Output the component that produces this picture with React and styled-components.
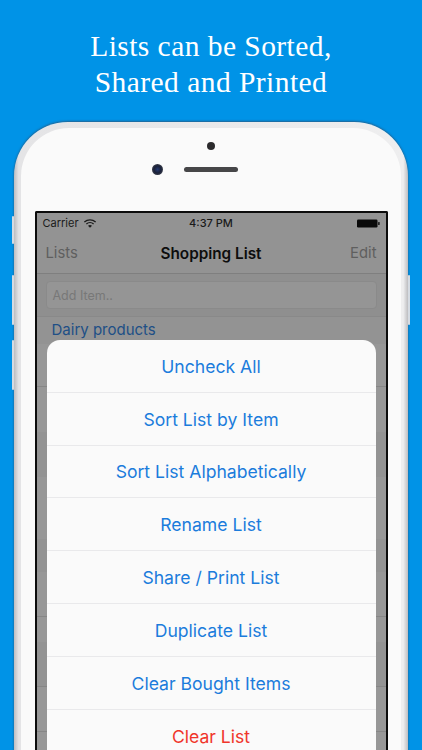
import React from "react";
import styled, { createGlobalStyle } from "styled-components";

const GlobalStyle = createGlobalStyle`
  html, body {
    margin: 0;
    padding: 0;
    background: #0093e7;
  }
`;

const Page = styled.div`
  width: 422px;
  height: 750px;
  overflow: hidden;
  background: #0093e7;
  display: flex;
  flex-direction: column;
  align-items: center;
`;

const Headline = styled.h1`
  margin: 0;
  padding-top: 28px;
  height: 94px;
  box-sizing: border-box;
  font-family: "Liberation Serif", serif;
  font-weight: 400;
  font-size: 29.5px;
  line-height: 36px;
  letter-spacing: 0.45px;
  color: #fff;
  text-align: center;
`;

const Phone = styled.div`
  position: relative;
  flex: none;
  width: 394px;
  height: 800px;
  box-sizing: border-box;
  margin-top: 28px;
  padding: 6px 7px 0;
  border-radius: 54px;
  background: linear-gradient(90deg, #bdbdc0 0, #e4e4e6 1.2%, #eeeeef 98.8%, #bdbdc0 100%);
  box-shadow: 0 -1px 2px rgba(60, 70, 90, 0.5), 0 0 2px rgba(60, 70, 90, 0.45);
`;

const Bezel = styled.div`
  height: 100%;
  box-sizing: border-box;
  padding-top: 83px;
  border-radius: 48px;
  background: #fafafa;
  display: flex;
  flex-direction: column;
  align-items: center;
`;

const SideButton = styled.span`
  position: absolute;
  top: ${(p) => p.$top}px;
  ${(p) => (p.$right ? "right: -2px;" : "left: -2px;")}
  width: 2px;
  height: ${(p) => p.$height}px;
  background: #d5dbe2;
  border-radius: 1px;
`;

const Sensor = styled.span`
  position: absolute;
  top: 20px;
  left: 193px;
  width: 8px;
  height: 8px;
  border-radius: 50%;
  background: #2b2a2c;
`;

const Camera = styled.span`
  position: absolute;
  top: 41.5px;
  left: 137.5px;
  width: 11px;
  height: 11px;
  border-radius: 50%;
  background: radial-gradient(circle at 50% 50%, #23386f 0, #1a2138 45%, #55575c 100%);
`;

const Speaker = styled.span`
  position: absolute;
  top: 45px;
  left: 170px;
  width: 54px;
  height: 5px;
  border-radius: 3px;
  background: #464648;
`;

const Screen = styled.div`
  position: relative;
  flex: none;
  width: 353px;
  height: 600px;
  box-sizing: border-box;
  border: 2px solid #0c0c0c;
  border-bottom: 0;
  border-radius: 2px 2px 0 0;
  background: #939393;
  font-family: Inter, "Liberation Sans", sans-serif;
  overflow: hidden;
`;

const StatusBar = styled.div`
  height: 20px;
  padding: 0 6px;
  display: grid;
  grid-template-columns: 1fr auto 1fr;
  align-items: center;
  font-size: 11px;
  color: #1a1a1a;
`;

const Carrier = styled.div`
  display: flex;
  align-items: center;
  gap: 5px;
`;

const Clock = styled.span`
  font-weight: 500;
`;

const BatteryWrap = styled.div`
  justify-self: end;
  display: flex;
  align-items: center;
`;

const NavBar = styled.div`
  height: 40px;
  padding: 0 9px;
  display: grid;
  grid-template-columns: 1fr auto 1fr;
  align-items: center;
  border-bottom: 1px solid #7f7f7f;
`;

const NavLink = styled.span`
  font-size: 14.8px;
  color: #5f5f5f;
  justify-self: ${(p) => (p.$end ? "end" : "start")};
`;

const NavTitle = styled.span`
  font-size: 15.3px;
  font-weight: 600;
  color: #0d0d0d;
`;

const SearchArea = styled.div`
  padding: 7px 9px;
  background: #8f8f8f;
  border-bottom: 1px solid #898989;
`;

const AddInput = styled.div`
  height: 26px;
  padding: 0 6px;
  display: flex;
  align-items: center;
  border: 1px solid #8a8a8a;
  border-radius: 4px;
  background: #959595;
  font-size: 12.5px;
  color: #787878;
`;

const SectionTitle = styled.div`
  padding: 3px 15px 0;
  height: 27px;
  box-sizing: border-box;
  font-size: 15px;
  color: #204f86;
`;

const ListRow = styled.div`
  height: ${(p) => p.$height}px;
  box-sizing: border-box;
  background: ${(p) => (p.$shade ? "#939393" : "#979797")};
  border-bottom: ${(p) => (p.$line ? "1px solid #868686" : "0")};
`;

const Sheet = styled.div`
  position: absolute;
  top: 127px;
  left: 10px;
  width: 329px;
  border-radius: 13px 13px 0 0;
  background: #fafafa;
`;

const SheetRow = styled.div`
  height: 52.8px;
  box-sizing: border-box;
  padding-top: 1px;
  display: flex;
  align-items: center;
  justify-content: center;
  border-bottom: 1px solid #e9e9eb;
  font-size: 17.6px;
  color: ${(p) => (p.$danger ? "#f0352b" : "#1b7cdc")};

  &:last-child {
    border-bottom: 0;
  }
`;

const WifiIcon = () => (
  <svg width="12" height="9" viewBox="0 0 12 9">
    <path d="M0.4 3.1a8.2 8.2 0 0 1 11.2 0" fill="none" stroke="#1a1a1a" strokeWidth="1.3" />
    <path d="M2.4 5a5.3 5.3 0 0 1 7.2 0" fill="none" stroke="#1a1a1a" strokeWidth="1.3" />
    <path d="M6 8.8 4 6.8a3 3 0 0 1 4 0z" fill="#1a1a1a" />
  </svg>
);

const BatteryIcon = () => (
  <svg width="23" height="9" viewBox="0 0 23 9">
    <rect x="0" y="0.5" width="20.5" height="8" rx="1.2" fill="#0a0a0a" />
    <rect x="21.2" y="3" width="1.4" height="3" rx="0.6" fill="#0a0a0a" />
  </svg>
);

const actions = [
  "Uncheck All",
  "Sort List by Item",
  "Sort List Alphabetically",
  "Rename List",
  "Share / Print List",
  "Duplicate List",
  "Clear Bought Items",
];

// what shows of the dimmed list beside the sheet
const rows = [
  { height: 43, line: true },
  { height: 45 },
  { height: 45, shade: true },
  { height: 62 },
  { height: 33, shade: true },
  { height: 45, line: true },
  { height: 25 },
  { height: 45, shade: true, line: true },
  { height: 45, line: true },
  { height: 45 },
];

const App = () => {
  return (
    <Page>
      <GlobalStyle />
      <Headline>
        Lists can be Sorted,
        <br />
        Shared and Printed
      </Headline>
      <Phone>
        <SideButton $top={94} $height={28} />
        <SideButton $top={153} $height={50} />
        <SideButton $top={218} $height={50} />
        <SideButton $right $top={153} $height={50} />
        <Bezel>
          <Sensor />
          <Camera />
          <Speaker />
          <Screen>
            <StatusBar>
              <Carrier>
                Carrier
                <WifiIcon />
              </Carrier>
              <Clock>4:37 PM</Clock>
              <BatteryWrap>
                <BatteryIcon />
              </BatteryWrap>
            </StatusBar>
            <NavBar>
              <NavLink>Lists</NavLink>
              <NavTitle>Shopping List</NavTitle>
              <NavLink $end>Edit</NavLink>
            </NavBar>
            <SearchArea>
              <AddInput>Add Item..</AddInput>
            </SearchArea>
            <SectionTitle>Dairy products</SectionTitle>
            {rows.map((row, idx) => (
              <ListRow key={idx} $height={row.height} $line={row.line} $shade={row.shade} />
            ))}
            <Sheet>
              {actions.map((label) => (
                <SheetRow key={label}>{label}</SheetRow>
              ))}
              <SheetRow $danger>Clear List</SheetRow>
            </Sheet>
          </Screen>
        </Bezel>
      </Phone>
    </Page>
  );
};

export default App;
